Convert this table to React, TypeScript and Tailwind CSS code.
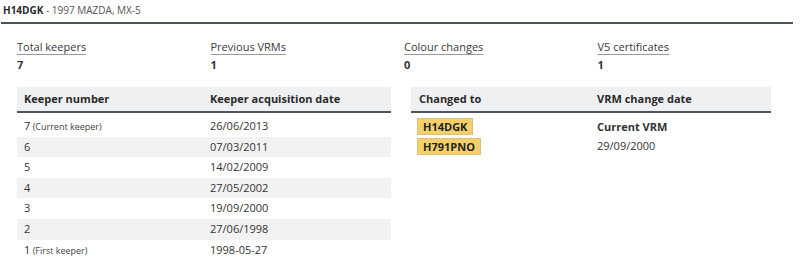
import React from "react";

const keepers = [
  { num: "7", note: "(Current keeper)", date: "26/06/2013" },
  { num: "6", note: "", date: "07/03/2011" },
  { num: "5", note: "", date: "14/02/2009" },
  { num: "4", note: "", date: "27/05/2002" },
  { num: "3", note: "", date: "19/09/2000" },
  { num: "2", note: "", date: "27/06/1998" },
  { num: "1", note: "(First keeper)", date: "1998-05-27" },
];

const vrms = [
  { plate: "H14DGK", date: "Current VRM", current: true },
  { plate: "H791PNO", date: "29/09/2000", current: false },
];

const stats = [
  { label: "Total keepers", value: "7" },
  { label: "Previous VRMs", value: "1" },
  { label: "Colour changes", value: "0" },
  { label: "V5 certificates", value: "1" },
];

export default function App() {
  return (
    <div
      className="w-[800px] h-[280px] bg-white text-[#333] overflow-hidden"
      style={{ fontFamily: '"Open Sans", sans-serif' }}
    >
      {/* header */}
      <div className="mx-[1px] mr-[7px] border-b-2 border-[#4a525c] pl-[2px] pt-[3px] h-[24px] text-[10px] leading-[14px]">
        <span className="font-bold text-[#2b2b2b]">H14DGK</span>
        <span className="text-[#555]"> - 1997 MAZDA, MX-5</span>
      </div>

      {/* stats */}
      <div className="grid grid-cols-4 pl-[17px] pr-[9px] pt-[15px]">
        {stats.map((s) => (
          <div key={s.label} className="flex flex-col">
            <span className="text-[11px] leading-[15px] text-[#3a3a3a] underline decoration-[#9a9a9a] underline-offset-[3px] self-start">
              {s.label}
            </span>
            <span className="text-[11px] leading-[15px] font-bold mt-[3px]">{s.value}</span>
          </div>
        ))}
      </div>

      {/* tables */}
      <div className="flex gap-[20px] pl-[17px] pt-[15px]">
        <div className="w-[374px]">
          <div className="grid grid-cols-[193px_1fr] h-[26px] bg-[#eff0f2] border-b-2 border-[#4f5660] items-center text-[11px] font-bold text-[#2b2b2b]">
            <span className="pl-[7px]">Keeper number</span>
            <span>Keeper acquisition date</span>
          </div>
          <div className="pt-[3px]">
            {keepers.map((k, i) => (
              <div
                key={k.num}
                className={`grid grid-cols-[193px_1fr] h-[20.6px] items-center text-[11px] ${
                  i % 2 === 1 ? "bg-[#f2f2f2]" : "bg-white"
                }`}
              >
                <span className="pl-[7px]">
                  {k.num}
                  {k.note && <span className="text-[9px] text-[#444]"> {k.note}</span>}
                </span>
                <span>{k.date}</span>
              </div>
            ))}
          </div>
        </div>

        <div className="w-[360px]">
          <div className="grid grid-cols-[186px_1fr] h-[26px] bg-[#eff0f2] border-b-2 border-[#4f5660] items-center text-[11px] font-bold text-[#2b2b2b]">
            <span className="pl-[8px]">Changed to</span>
            <span>VRM change date</span>
          </div>
          <div className="pt-[4px]">
            {vrms.map((v) => (
              <div key={v.plate} className="grid grid-cols-[186px_1fr] h-[19.5px] items-center text-[11px]">
                <span className="pl-[6px] flex">
                  <span className="bg-[#f4d06c] border border-[#dcc078] px-[5px] h-[17px] leading-[15px] font-bold text-[11px] text-[#222]">
                    {v.plate}
                  </span>
                </span>
                <span className={v.current ? "font-bold" : ""}>{v.date}</span>
              </div>
            ))}
          </div>
        </div>
      </div>
    </div>
  );
}
